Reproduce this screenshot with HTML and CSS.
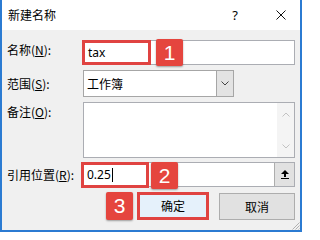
FILE: index.html
```html
<!DOCTYPE html>
<html lang="zh-CN">
<head>
<meta charset="utf-8">
<title>新建名称</title>
<link rel="stylesheet" href="styles.css">
</head>
<body>
<div class="window">
  <div class="titlebar">
    <span class="title">新建名称</span>
    <span class="help">?</span>
    <svg class="close" width="10" height="10" viewBox="0 0 10 10"><path d="M0.5 0.5 L9.5 9.5 M9.5 0.5 L0.5 9.5" stroke="#111" stroke-width="1" fill="none"/></svg>
  </div>
  <div class="content">
    <div class="row row-name">
      <label class="lbl lbl-name">名称(<u>N</u>):</label>
      <div class="field">
        <span class="val">tax</span>
        <span class="hl hl-name"></span>
        <span class="badge badge-1">1</span>
      </div>
    </div>
    <div class="row row-scope">
      <label class="lbl">范围(<u>S</u>):</label>
      <div class="combo">
        <span class="combo-val">工作簿</span>
        <span class="drop">
          <svg width="8" height="5" viewBox="0 0 8 5"><path d="M0.5 0.5 L4 4 L7.5 0.5" stroke="#444" stroke-width="1" fill="none"/></svg>
        </span>
      </div>
    </div>
    <div class="row row-memo">
      <label class="lbl lbl-memo">备注(<u>O</u>):</label>
      <div class="memo">
        <div class="memo-text"></div>
        <div class="vscroll">
          <svg width="8" height="5" viewBox="0 0 8 5"><path d="M0.5 4.5 L4 1 L7.5 4.5" stroke="#c2c2c2" stroke-width="1" fill="none"/></svg>
          <svg width="8" height="5" viewBox="0 0 8 5"><path d="M0.5 0.5 L4 4 L7.5 0.5" stroke="#c2c2c2" stroke-width="1" fill="none"/></svg>
        </div>
      </div>
    </div>
    <div class="row row-ref">
      <label class="lbl">引用位置(<u>R</u>):</label>
      <div class="field field-ref">
        <span class="val">0.25</span><span class="caret"></span>
        <span class="collapse">
          <svg width="8" height="9" viewBox="0 0 8 9"><path d="M4 0 L8 4 L5 4 L5 7 L3 7 L3 4 L0 4 Z" fill="#000"/><rect x="0" y="8" width="8" height="1" fill="#000"/></svg>
        </span>
        <span class="hl hl-ref"></span>
        <span class="badge badge-2">2</span>
      </div>
    </div>
    <div class="buttons">
      <div class="btn btn-ok">确定<span class="badge badge-3">3</span></div>
      <div class="btn btn-cancel">取消</div>
    </div>
  </div>
  <svg class="grip" width="8" height="8" viewBox="0 0 8 8"><path d="M7.5 0.5 L0.5 7.5 M7.5 3.5 L3.5 7.5 M7.5 6.5 L6.5 7.5" stroke="#b0b0b0" stroke-width="1" fill="none"/></svg>
</div>
</body>
</html>
```

FILE: styles.css
```css
* { box-sizing: border-box; }
body {
  margin: 0;
  font-family: "Noto Sans CJK SC", "Noto Sans", sans-serif;
  font-size: 12px;
  color: #000;
}
.window {
  position: relative;
  width: 302px;
  height: 232px;
  border: 2px solid #2b7bd2;
  border-top: 0;
  background: #f0f0f0;
  display: flex;
  flex-direction: column;
}
.titlebar {
  height: 30px;
  background: #fff;
  display: flex;
  align-items: center;
  padding: 0 14px 0 6px;
}
.title { flex: 1; font-size: 12px; line-height: 16px; }
.help {
  font-family: "Noto Sans", sans-serif;
  font-size: 13px;
  line-height: 16px;
  margin-right: 38px;
}
.close { display: block; }
.content {
  flex: 1;
  padding: 10px 5px 10px 5px;
  display: flex;
  flex-direction: column;
}
.row {
  display: grid;
  grid-template-columns: 76px 1fr;
  align-items: center;
}
.row-scope { margin-top: 5px; }
.row-memo { margin-top: 5px; align-items: start; }
.row-ref { margin-top: 4px; }
.lbl { line-height: 16px; white-space: nowrap; }
.lbl u { text-underline-offset: 1px; }
.lbl-name { margin-bottom: 5px; }
.lbl-memo { padding-top: 2px; }
.field {
  position: relative;
  height: 25px;
  border: 1px solid #abadb3;
  background: #fff;
  display: flex;
  align-items: center;
  padding-left: 4px;
  font-family: "Noto Sans", sans-serif;
  font-size: 12px;
}
.field-ref { padding-left: 3px; }
.caret {
  width: 1px;
  height: 14px;
  background: #000;
  margin-left: 1px;
}
.collapse {
  margin-left: auto;
  width: 20px;
  height: 23px;
  background: #e1e1e1;
  border-left: 1px solid #adadad;
  display: flex;
  align-items: center;
  justify-content: center;
}
.collapse svg { display: block; }
.hl {
  position: absolute;
  border: 3px solid #e04341;
}
.hl-name { left: -2px; top: -1px; width: 69px; height: 25px; }
.hl-ref { left: -3px; top: -1px; width: 68px; height: 26px; }
.badge {
  position: absolute;
  width: 27px;
  height: 27px;
  background: #e5453e;
  color: #fff;
  font-family: "Liberation Sans", Arial, sans-serif;
  font-size: 21px;
  display: flex;
  align-items: center;
  justify-content: center;
  border-radius: 2px;
  box-shadow: 0 1px 2px rgba(0, 0, 0, 0.35);
}
.badge-1 { left: 72px; top: -2px; }
.badge-2 { left: 67px; top: -1px; }
.badge-3 { left: -34px; top: -3px; width: 27px; height: 28px; }
.combo {
  width: 151px;
  height: 27px;
  border: 1px solid #a6a6a6;
  background: #fff;
  display: flex;
  align-items: center;
  padding-left: 3px;
}
.combo-val { flex: 1; }
.drop {
  width: 17px;
  height: 25px;
  background: #e3e3e3;
  border-left: 1px solid #a6a6a6;
  display: flex;
  align-items: center;
  justify-content: center;
}
.drop svg { display: block; }
.memo {
  height: 56px;
  border: 1px solid #abadb3;
  background: #fff;
  display: flex;
}
.memo-text { flex: 1; }
.vscroll {
  width: 17px;
  background: #f4f4f4;
  display: flex;
  flex-direction: column;
  justify-content: space-between;
  align-items: center;
  padding: 9px 0 8px;
}
.vscroll svg { display: block; }
.buttons {
  margin-top: 5px;
  display: flex;
  justify-content: flex-end;
  align-items: flex-start;
  gap: 10px;
}
.btn {
  position: relative;
  display: flex;
  align-items: center;
  justify-content: center;
  line-height: 16px;
}
.btn-ok {
  width: 72px;
  height: 28px;
  border: 3px solid #e04341;
  background: #e5f1fb;
}
.btn-cancel {
  width: 76px;
  height: 27px;
  margin-top: 1px;
  border: 1px solid #adadad;
  background: #e1e1e1;
}
.grip {
  position: absolute;
  right: 0;
  bottom: 0;
  display: block;
}
```
